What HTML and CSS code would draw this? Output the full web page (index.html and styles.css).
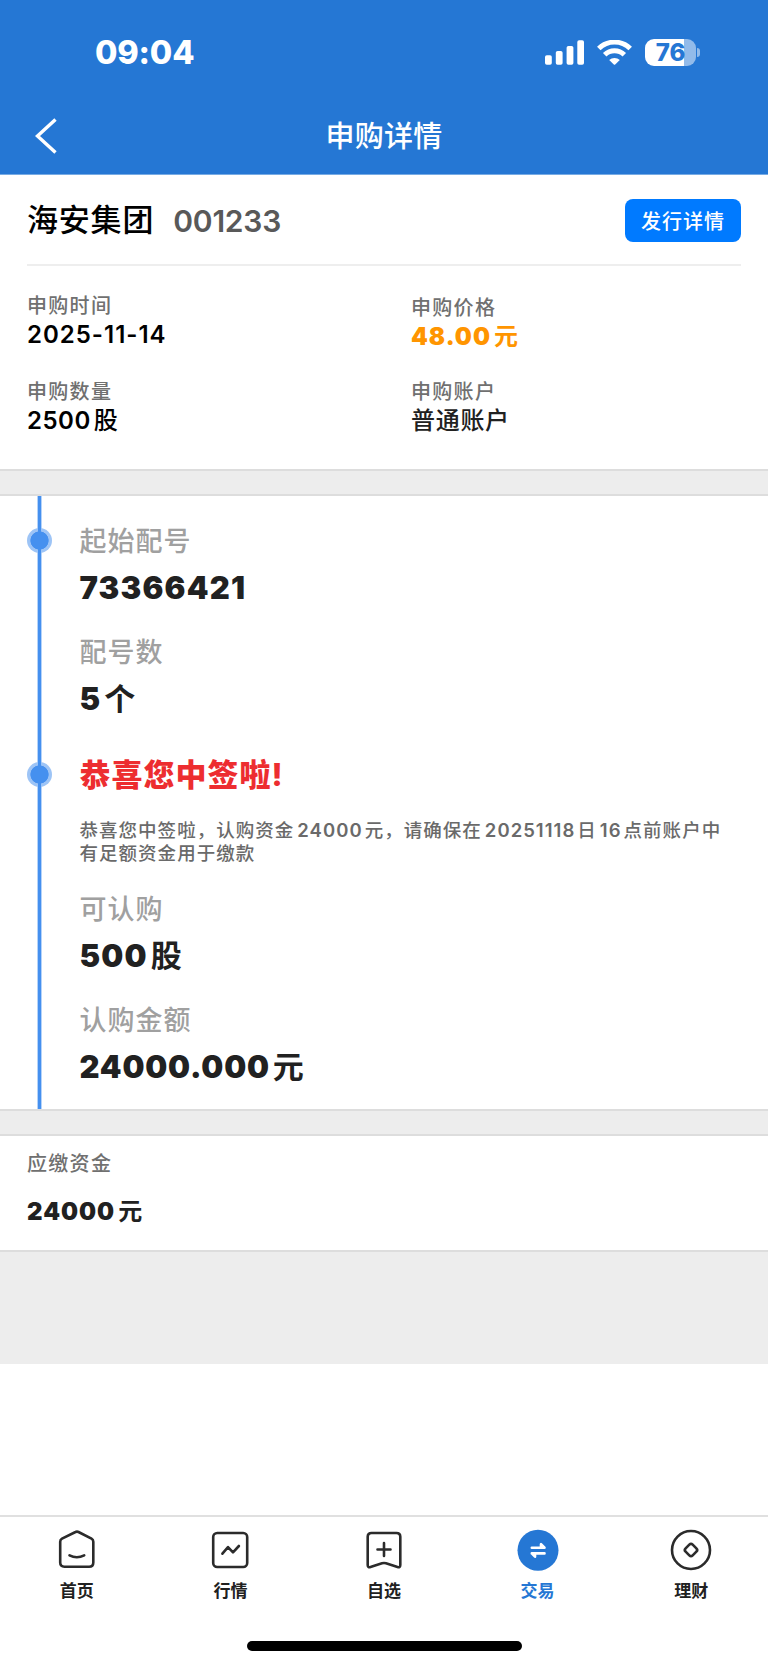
FILE: index.html
```
<!DOCTYPE html>
<html lang="zh-CN">
<head>
  <meta charset="UTF-8" />
  <meta name="viewport" content="width=device-width, initial-scale=1" />
  <title>申购详情</title>
  <link rel="stylesheet" href="styles.css">
</head>
<body>

  <header class="header">
    <!-- Status bar -->
    <div class="status-bar">
      <div class="clock">09:04</div>
      <div class="status-icons">
        <svg class="signal" viewBox="0 0 39 25" aria-hidden="true">
          <rect x="0" y="15.3" width="6.8" height="9.4" rx="1.8"/>
          <rect x="10.8" y="11" width="6.8" height="13.7" rx="1.8"/>
          <rect x="21.6" y="6" width="6.8" height="18.7" rx="1.8"/>
          <rect x="32.3" y="0.3" width="6.7" height="24.4" rx="1.8"/>
        </svg>
        <svg class="wifi" viewBox="0 0 35 25" aria-hidden="true">
          <path class="arc" d="M1.8 8.5A22.5 22.5 0 0 1 33.2 8.5"/>
          <path class="arc" d="M7.7 14.8A14 14 0 0 1 27.3 14.8"/>
          <path d="M12.2 20A7.8 7.8 0 0 1 22.8 20L18.2 24.5Q17.5 25.1 16.8 24.5Z"/>
        </svg>
        <div class="battery"><span>76</span></div>
        <div class="battery-cap"></div>
      </div>
    </div>

    <!-- Title bar -->
    <div class="nav-bar">
      <a href="#" class="back" aria-label="返回">
        <svg viewBox="0 0 22 36" aria-hidden="true">
          <path d="M20.5 1.5L2.5 18L20.5 34.5"/>
        </svg>
      </a>
      <h1>申购详情</h1>
    </div>
  </header>

  <section class="stock">
    <div class="stock-head">
      <h2>海安集团</h2>
      <span class="code">001233</span>
      <button class="detail-button">发行详情</button>
    </div>
    <div class="stock-info">
      <div class="info">
        <div class="label">申购时间</div>
        <div class="value">2025-11-14</div>
      </div>
      <div class="info price">
        <div class="label">申购价格</div>
        <div class="value">48.00<span class="unit">元</span></div>
      </div>
      <div class="info amount">
        <div class="label">申购数量</div>
        <div class="value">2500<span class="unit">股</span></div>
      </div>
      <div class="info account">
        <div class="label">申购账户</div>
        <div class="value">普通账户</div>
      </div>
    </div>
  </section>

  <div class="divider"></div>

  <!-- Lottery timeline -->
  <section class="timeline">
    <div class="rail">
      <i class="dot"></i>
      <i class="dot"></i>
    </div>
    <div class="steps">
      <div class="step">
        <div class="step-label">起始配号</div>
        <div class="step-value">73366421</div>
        <div class="step-label">配号数</div>
        <div class="step-value">5<span class="unit">个</span></div>
      </div>
      <div class="step">
        <h3>恭喜您中签啦!</h3>
        <p>恭喜您中签啦，认购资金<b>24000</b>元，请确保在<b>20251118</b>日<b>16</b>点前账户中有足额资金用于缴款</p>
        <div class="step-label">可认购</div>
        <div class="step-value">500<span class="unit">股</span></div>
        <div class="step-label">认购金额</div>
        <div class="step-value money">24000.000<span class="unit">元</span></div>
      </div>
    </div>
  </section>

  <div class="divider"></div>

  <section class="payment">
    <div class="label">应缴资金</div>
    <div class="value">24000<span class="unit">元</span></div>
  </section>
  <div class="filler"></div>

  <!-- Bottom tabs -->
  <nav class="tabs">
    <a href="#" class="tab">
      <svg viewBox="0 0 42 42" aria-hidden="true">
        <path d="M19.5 3Q21 2.2 22.5 3L35.5 9.7Q37.3 10.7 37.3 12.8V33.5Q37.3 37.7 33.1 37.7H8.4Q4.2 37.7 4.2 33.5V12.8Q4.2 10.7 6 9.7Z"/>
        <path d="M13.5 26.3Q20.8 30.1 28.2 26.3"/>
      </svg>
      首页
    </a>
    <a href="#" class="tab">
      <svg viewBox="0 0 42 42" aria-hidden="true">
        <rect x="4.2" y="4" width="34" height="34" rx="4"/>
        <path d="M13.4 24.7L19 18.1L24 23.3L29.9 17"/>
      </svg>
      行情
    </a>
    <a href="#" class="tab">
      <svg viewBox="0 0 42 42" aria-hidden="true">
        <path d="M8.5 4H33.5Q37.3 4 37.3 7.8V36Q37.3 38.8 34.5 38L23 34.3Q21 33.7 19 34.3L7.5 38Q4.7 38.8 4.7 36V7.8Q4.7 4 8.5 4Z"/>
        <path d="M21 14V27M14.5 20.5H27.5"/>
      </svg>
      自选
    </a>
    <a href="#" class="tab active">
      <svg viewBox="0 0 42 42" aria-hidden="true">
        <circle cx="21" cy="21.3" r="20.5"/>
        <path class="arrow" d="M14.8 18.7H27.5L24 15.2V18M27.5 24.4H14.8M14.8 24.4L18 27.7V25"/>
      </svg>
      交易
    </a>
    <a href="#" class="tab">
      <svg viewBox="0 0 42 42" aria-hidden="true">
        <circle cx="21" cy="21" r="19"/>
        <rect x="16" y="16" width="10" height="10" rx="2.4" transform="rotate(45 21 21)"/>
      </svg>
      理财
    </a>
  </nav>
  <div class="home-indicator"></div>

</body>
</html>
```
FILE: styles.css
```
* {
  box-sizing: border-box;
}

body {
  margin: 0;
  min-height: 1665px;
  display: flex;
  flex-direction: column;
  font-family: Inter, "Noto Sans CJK SC", sans-serif;
  background: #fff;
  color: #212121;
}

h1, h2, h3, p {
  margin: 0;
}

.header {
  height: 175px;
  background: #2577d4;
  border-bottom: 1px solid #77abe4;
  color: #fff;
}

.status-bar {
  height: 104px;
  padding: 0 68px 0 95px;
  display: flex;
  align-items: center;
  justify-content: space-between;
}

.clock {
  padding-top: 2px;
  font-size: 32.5px;
  font-weight: 800;
  line-height: 40px;
  letter-spacing: -0.2px;
}

.status-icons {
  display: flex;
  align-items: center;
}

.status-icons svg {
  height: 25px;
  fill: #fff;
}

.signal {
  width: 39px;
  margin-right: 13px;
}

.wifi {
  width: 35px;
  margin-right: 13px;
}

.wifi .arc {
  fill: none;
  stroke: #fff;
  stroke-width: 5;
}

.battery {
  width: 51px;
  height: 27px;
  border-radius: 9px;
  background: linear-gradient(to right, #fff 39px, #92bbea 39px);
  color: #2577d4;
  font-size: 24px;
  font-weight: 800;
  line-height: 27px;
  text-align: center;
}

.battery-cap {
  width: 3px;
  height: 9px;
  margin-left: 1px;
  border-radius: 0 3px 3px 0;
  background: #92bbea;
}

.nav-bar {
  height: 64px;
  padding: 0 35px;
  display: grid;
  grid-template-columns: 22px 1fr 22px;
  align-items: center;
}

.back svg {
  display: block;
  width: 22px;
  height: 36px;
  fill: none;
  stroke: #fff;
  stroke-width: 3.4;
}

.nav-bar h1 {
  padding-top: 2px;
  font-size: 29px;
  font-weight: 500;
  line-height: 40px;
  letter-spacing: 0.3px;
  text-align: center;
}

.stock {
  height: 294px;
  padding: 0 27px;
}

.stock-head {
  height: 91px;
  padding-top: 1px;
  display: flex;
  align-items: center;
  border-bottom: 2px solid #eee;
  color: #000;
}

.stock-head h2 {
  font-size: 31px;
  font-weight: 500;
  line-height: 44px;
  letter-spacing: 0.8px;
}

.code {
  margin-left: 19px;
  padding-top: 1px;
  font-size: 30px;
  font-weight: 600;
  line-height: 44px;
  letter-spacing: -0.2px;
  color: #595959;
}

.detail-button {
  width: 116px;
  height: 43px;
  margin-left: auto;
  padding: 0;
  border: 0;
  border-radius: 8px;
  background: #007aff;
  color: #fff;
  font-family: inherit;
  font-size: 20px;
  font-weight: 500;
  letter-spacing: 1px;
}

.stock-info {
  padding-top: 26px;
  display: grid;
  grid-template-columns: 384px 1fr;
  grid-auto-rows: 86px;
}

.label {
  font-size: 20px;
  font-weight: 500;
  line-height: 29px;
  letter-spacing: 1.3px;
  color: #707070;
}

.value {
  font-size: 24px;
  font-weight: 600;
  line-height: 28px;
  letter-spacing: 1px;
}

.unit {
  margin-left: 3px;
}

.info .value {
  color: #000;
}

.price {
  padding-top: 2px;
}

.price .value {
  font-weight: 900;
  color: #ff9500;
}

.price .unit {
  font-weight: 700;
}

.amount .value {
  letter-spacing: 0.5px;
}

.amount .unit {
  font-weight: 500;
}

.account .value {
  font-weight: 500;
  letter-spacing: 0.7px;
  color: #212121;
}

.divider {
  height: 27px;
  background: #ededed;
  border-top: 2px solid #ddd;
  border-bottom: 2px solid #ddd;
}

.timeline {
  height: 613px;
  display: flex;
}

.rail {
  width: 79px;
  padding-top: 32px;
  display: flex;
  flex-direction: column;
  align-items: center;
  gap: 209px;
  background: linear-gradient(to right, #b5d3f9 1px, #4590ef 1px 4px, #b5d3f9 4px) 37px 0 / 5px 100% no-repeat;
}

.dot {
  width: 25px;
  height: 25px;
  border-radius: 50%;
  background:
    linear-gradient(#4590ef, #4590ef) center / 3px 100% no-repeat,
    radial-gradient(circle, #4590ef 8.8px, #9dc4f6 9.4px);
}

.steps {
  flex: 1;
  padding: 26px 38px 0 0.5px;
}

.step-label {
  font-size: 27px;
  font-weight: 500;
  line-height: 40px;
  letter-spacing: 1px;
  color: #a0a0a0;
}

.step-value {
  margin: 6px 0 25px;
  font-size: 31px;
  font-weight: 900;
  line-height: 40px;
  letter-spacing: 1.2px;
}

.step-value .unit {
  margin-left: 3px;
  font-weight: 700;
}

.step-value.money {
  letter-spacing: 0.8px;
}

.step h3 {
  margin-top: 36px;
  font-size: 31px;
  font-weight: 800;
  line-height: 40px;
  letter-spacing: 1px;
  color: #ed2d30;
}

.step p {
  margin: 24px 0 25px;
  font-size: 18.5px;
  font-weight: 500;
  line-height: 23px;
  letter-spacing: 1.03px;
  color: #6a6a6a;
}

.step b {
  margin: 0 2px 0 3px;
  font-weight: 600;
}

.payment {
  height: 114px;
  padding: 14px 27px 0;
}

.payment .value {
  margin-top: 19px;
  font-weight: 900;
}

.payment .unit {
  font-weight: 700;
}

.filler {
  height: 114px;
  background: #ededed;
  border-top: 2px solid #ddd;
}

.tabs {
  margin-top: auto;
  height: 126px;
  padding-top: 12px;
  display: flex;
  border-top: 2px solid #e0e0e0;
}

.tab {
  flex: 1;
  display: flex;
  flex-direction: column;
  align-items: center;
  gap: 8px;
  font-size: 17px;
  font-weight: 600;
  line-height: 24px;
  color: #212121;
  text-decoration: none;
}

.tab svg {
  width: 42px;
  height: 42px;
  fill: none;
  stroke: #2b2b2b;
  stroke-width: 2.6;
  stroke-linecap: round;
  stroke-linejoin: round;
}

.tab.active {
  color: #2577d4;
}

.tab.active circle {
  fill: #2577d4;
  stroke: none;
}

.tab .arrow {
  stroke: #fff;
}

.home-indicator {
  width: 275px;
  height: 10px;
  margin: 0 auto 14px;
  border-radius: 5px;
  background: #000;
}
```
